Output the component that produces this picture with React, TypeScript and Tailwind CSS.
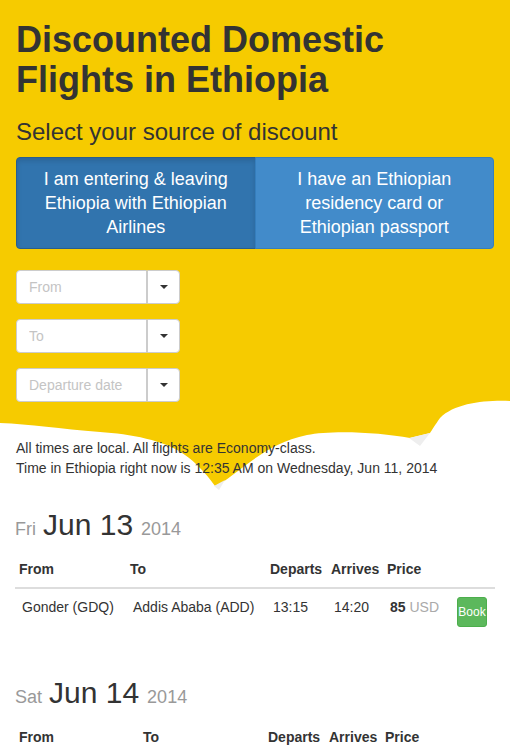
import React from "react";

type Flight = {
  from: string;
  to: string;
  departs: string;
  arrives: string;
  price: string;
};

type Day = {
  weekday: string;
  date: string;
  year: string;
  cols: number[];
  flights: Flight[];
};

const days: Day[] = [
  {
    weekday: "Fri",
    date: "Jun 13",
    year: "2014",
    cols: [111, 140, 61, 56, 66, 46],
    flights: [
      {
        from: "Gonder (GDQ)",
        to: "Addis Ababa (ADD)",
        departs: "13:15",
        arrives: "14:20",
        price: "85",
      },
    ],
  },
  {
    weekday: "Sat",
    date: "Jun 14",
    year: "2014",
    cols: [124, 125, 61, 56, 68, 46],
    flights: [],
  },
];

function SelectBox({ placeholder }: { placeholder: string }) {
  return (
    <div className="flex h-[34px] w-[164px]">
      <input
        readOnly
        placeholder={placeholder}
        className="h-full w-[131px] rounded-l-[4px] border border-[#ccc] bg-white px-3 text-[14px] outline-none placeholder:text-[#c4c4c4]"
      />
      <div className="flex h-full w-[33px] items-center justify-center rounded-r-[4px] border border-[#ccc] bg-white">
        <span className="h-0 w-0 border-x-[4px] border-t-[4px] border-x-transparent border-t-[#333]" />
      </div>
    </div>
  );
}

export default function App() {
  return (
    <div className="min-h-screen bg-white font-['Liberation_Sans',Arial,sans-serif] text-[#333]">
      {/* Yellow header with cloud edge */}
      <div className="relative pb-[12px]">
        <svg
          className="absolute left-0 top-0 h-[490px] w-full"
          viewBox="0 0 510 490"
          preserveAspectRatio="none"
        >
          <path
            d="M0 0 H510 V401 C485 400 455 403 440 418 C435 425 432 430 430 433 L410 438 C380 432 330 430 307 435 C260 445 235 478 215 486 C205 472 195 462 185 455 C165 440 130 434 100 432 C60 429 30 424 0 423 Z"
            fill="#f6cb00"
          />
          <path d="M409 438 L430 433 L420 446 Z" fill="#eeeeee" />
          <path d="M214 486 L225 480 L219 490 Z" fill="#eeeeee" />
        </svg>

        <div className="relative px-4 pt-[20px]">
          <h1 className="text-[36px] font-bold leading-[39.6px]">
            Discounted Domestic
            <br />
            Flights in Ethiopia
          </h1>

          <h3 className="mt-[20px] text-[24px] leading-[26.4px]">
            Select your source of discount
          </h3>

          {/* Discount source buttons */}
          <div className="mt-[11px] flex text-center text-[18px] leading-[24px] text-white">
            <div className="flex-1 rounded-l-[4px] border border-[#285e8e] bg-[#3174ae] px-4 py-[9px] shadow-[inset_0_3px_5px_rgba(0,0,0,0.125)]">
              I am entering &amp; leaving
              <br />
              Ethiopia with Ethiopian
              <br />
              Airlines
            </div>
            <div className="-ml-px flex-1 rounded-r-[4px] border border-[#357ebd] bg-[#428bca] px-4 py-[9px]">
              I have an Ethiopian
              <br />
              residency card or
              <br />
              Ethiopian passport
            </div>
          </div>

          {/* Search fields */}
          <div className="mt-[21px] flex flex-col gap-[15px]">
            <SelectBox placeholder="From" />
            <SelectBox placeholder="To" />
            <SelectBox placeholder="Departure date" />
          </div>

          <p className="mt-[36px] text-[14px] leading-[20px]">
            All times are local. All flights are Economy-class.
            <br />
            Time in Ethiopia right now is 12:35 AM on Wednesday, Jun 11, 2014
          </p>
        </div>
      </div>

      {/* Flights by day */}
      <div className="px-[15px]">
        {days.map((day, i) => (
          <div key={day.date} className={i === 0 ? "mt-[18px]" : "mt-[41px]"}>
            <h2 className="leading-[33px]">
              <span className="text-[18px] text-[#999]">{day.weekday}</span>
              <span className="ml-[7px] mr-[8px] text-[30px]">{day.date}</span>
              <span className="text-[18px] text-[#999]">{day.year}</span>
            </h2>

            <table className="mt-[5px] w-[480px] table-fixed border-collapse text-left text-[14px] leading-[20px]">
              <colgroup>
                {day.cols.map((w, j) => (
                  <col key={j} style={{ width: w }} />
                ))}
              </colgroup>
              <thead>
                <tr>
                  {["From", "To", "Departs", "Arrives", "Price", ""].map((h, j) => (
                    <th
                      key={j}
                      className="border-b-2 border-[#ddd] py-[8px] pl-[4px] font-bold"
                    >
                      {h}
                    </th>
                  ))}
                </tr>
              </thead>
              <tbody>
                {day.flights.map((f) => (
                  <tr key={f.from + f.to} className="align-top">
                    <td className="whitespace-nowrap py-[8px] pl-[7px]">{f.from}</td>
                    <td className="whitespace-nowrap py-[8px] pl-[7px]">{f.to}</td>
                    <td className="py-[8px] pl-[7px]">{f.departs}</td>
                    <td className="py-[8px] pl-[7px]">{f.arrives}</td>
                    <td className="whitespace-nowrap py-[8px] pl-[7px]">
                      <b>{f.price}</b> <span className="text-[#aaa]">USD</span>
                    </td>
                    <td className="py-[8px] pl-[8px]">
                      <button className="flex h-[30px] w-[30px] items-center justify-center rounded-[3px] border border-[#4cae4c] bg-[#5cb85c] text-[12px] text-white">
                        Book
                      </button>
                    </td>
                  </tr>
                ))}
              </tbody>
            </table>
          </div>
        ))}
      </div>
    </div>
  );
}
